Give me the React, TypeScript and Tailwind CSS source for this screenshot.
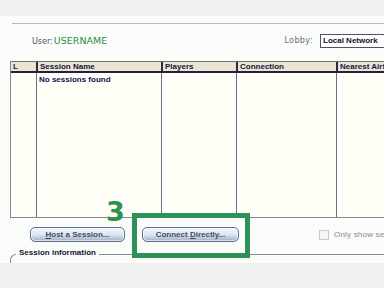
import React from 'react';

const COLS = ['L', 'Session Name', 'Players', 'Connection', 'Nearest Airfield'];
const WIDTHS = ['w-[25px]', 'w-[125px]', 'w-[75px]', 'w-[100px]', 'w-[100px]'];

function PillButton({ pre, hot, post, className }: { pre: string; hot: string; post: string; className: string }) {
  return (
    <button
      className={`shrink-0 h-[15px] rounded-[5px] border border-[#5f6f8f] bg-gradient-to-b from-[#f4f7fc] via-[#dfe6f1] to-[#9eaecb] shadow-[inset_0_0_0_1px_rgba(255,255,255,0.6)] text-[8px] font-bold text-[#4a4a5a] leading-none flex items-center justify-center whitespace-pre ${className}`}
    >
      <span>
        {pre}
        <span className="underline">{hot}</span>
        {post}
      </span>
    </button>
  );
}

export default function App() {
  return (
    <div className="relative w-[384px] h-[288px] overflow-hidden bg-[#f1f1f1] font-['Liberation_Sans',Arial,sans-serif]">
      <div className="h-[16px]" />

      <div className="h-[247px] bg-[#fafcf9] flex flex-col overflow-hidden">
        {/* divider */}
        <div className="shrink-0 mt-[7px] ml-[12px] h-px bg-[#b6bab6]" />

        {/* user + lobby row */}
        <div className="shrink-0 mt-[10px] h-[14px] flex items-center">
          <div className="ml-[32px] flex items-baseline font-['DejaVu_Sans',sans-serif]">
            <span className="text-[8px] text-[#505060]">User:</span>
            <span className="ml-px text-[9.5px] text-[#2f8a45]">USERNAME</span>
          </div>
          <span className="ml-auto text-[8px] text-[#707070] tracking-[0.4px] font-['DejaVu_Sans',sans-serif]">Lobby:</span>
          <div className="ml-[7px] w-[64px] shrink-0 h-[14px] border border-[#505060] border-r-0 bg-white flex items-center pl-[2px] text-[8px] font-bold text-[#101030] whitespace-nowrap overflow-hidden">
            Local Network
          </div>
        </div>

        {/* sessions table */}
        <div className="shrink-0 mt-[13px] ml-[10px] w-[440px] h-[157px] border-l border-b border-[#86869a] bg-[#fffef7] flex flex-col">
          <div className="h-[12px] shrink-0 flex border-t border-[#707070] border-b-2 border-b-[#22223c] bg-[#ece4d4]">
            {COLS.map((c, i) => (
              <div
                key={c}
                className={`${WIDTHS[i]} shrink-0 h-full pl-[2px] flex items-center text-[8px] font-bold text-[#15153a] whitespace-nowrap ${i > 0 ? 'border-l-2 border-[#2a2a48]' : ''}`}
              >
                {c}
              </div>
            ))}
          </div>
          <div className="flex-1 flex">
            {COLS.map((c, i) => (
              <div key={c} className={`${WIDTHS[i]} shrink-0 h-full ${i > 0 ? 'border-l border-[#6e6e8c]' : ''}`}>
                {i === 1 && (
                  <div className="pl-[2px] pt-[3px] text-[8px] font-bold text-[#101058] leading-none">No sessions found</div>
                )}
              </div>
            ))}
          </div>
        </div>

        {/* buttons */}
        <div className="shrink-0 mt-[9px] h-[15px] flex items-center">
          <PillButton pre="" hot="H" post="ost a Session..." className="ml-[30px] w-[95px]" />
          <PillButton pre="Connect " hot="D" post="irectly..." className="ml-[17px] w-[97px]" />
          <div className="shrink-0 ml-[80px] w-[10px] h-[10px] border border-[#c4c8d0] bg-[#f4f5f7]" />
          <span className="shrink-0 ml-[5px] whitespace-nowrap text-[8px] text-[#8a8a8a] tracking-[0.2px] font-['Liberation_Sans',sans-serif]">Only show sessions</span>
        </div>

        {/* session information group */}
        <div className="shrink-0 relative mt-[12px] ml-[10px] h-[20px] border-l border-t border-[#8a8a98] rounded-tl-[6px]">
          <span className="absolute -top-[6px] left-[5px] px-[3px] bg-[#fafcf9] text-[8px] font-bold text-[#151530] leading-none">
            Session information
          </span>
        </div>
      </div>

      {/* annotation overlay */}
      <div className="absolute left-[106px] top-[198px] text-[27px] leading-none font-bold text-[#2f9150] font-['DejaVu_Sans',sans-serif]">
        3
      </div>
      <div className="absolute left-[132px] top-[213px] w-[118px] h-[45px] border-[5px] border-[#2f9158]" />
    </div>
  );
}
